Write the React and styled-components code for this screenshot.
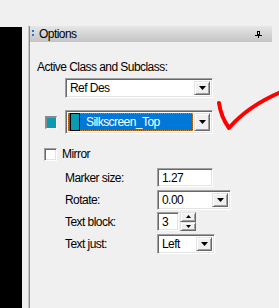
import React from 'react';
import styled, { createGlobalStyle } from 'styled-components';

const GlobalStyle = createGlobalStyle`
  body {
    margin: 0;
    background: #f0f0f0;
    font-family: "Liberation Sans", Arial, sans-serif;
  }
`;

const TEAL = '#0c9ab0';

const Page = styled.div`
  position: relative;
  width: 279px;
  height: 308px;
  overflow: hidden;
  background: #f0f0f0;
  display: flex;
  flex-direction: column;
  font-size: 12px;
  letter-spacing: -0.55px;
  color: #000;
`;

const TopStrip = styled.div`
  height: 26px;
  flex: none;
`;

const Body = styled.div`
  flex: 1;
  display: flex;
`;

const BlackPane = styled.div`
  width: 22px;
  margin-top: 1px;
  background: #000;
`;

const Dock = styled.div`
  margin-left: 7px;
  width: 242px;
  border-left: 1px solid #8c8c8c;
  box-shadow: -1px 0 0 #c8c8c8;
  display: flex;
  flex-direction: column;
`;

const Header = styled.div`
  height: 16px;
  display: flex;
  align-items: center;
  padding-left: 2px;
  background: linear-gradient(#e6e6e6, #c4c4c4);
`;

const Grip = styled.div`
  width: 2px;
  height: 7px;
  background: linear-gradient(#1e78d8 0 2px, transparent 2px 4px, #1e78d8 4px 6px, transparent 6px);
  margin-top: -1px;
`;

const Title = styled.span`
  margin-left: 5px;
  flex: 1;
`;

const Pin = styled.svg`
  margin-right: 10px;
`;

const Content = styled.div`
  padding: 18px 0 0 7px;
  display: flex;
  flex-direction: column;
`;

const Label = styled.div`
  line-height: 14px;
  white-space: nowrap;
`;

const Field = styled.div`
  box-sizing: border-box;
  width: ${p => p.$w}px;
  height: ${p => p.$h || 20}px;
  background: #fff;
  border-top: 1px solid #a0a0a0;
  border-left: 1px solid #a0a0a0;
  border-right: 1px solid #fff;
  border-bottom: 1px solid #fff;
  box-shadow: inset 1px 1px 0 #696969, inset -1px -1px 0 #e3e3e3;
  padding: 2px;
  display: flex;
  align-items: stretch;
  margin-left: ${p => p.$ml || 0}px;
  margin-top: ${p => p.$mt || 0}px;
`;

const FieldText = styled.div`
  flex: 1;
  display: flex;
  align-items: center;
  padding-left: 2px;
  white-space: nowrap;
  overflow: hidden;
`;

const RaisedButton = styled.div`
  box-sizing: border-box;
  width: ${p => p.$w || 16}px;
  flex: none;
  background: #f0f0f0;
  border-top: 1px solid #e3e3e3;
  border-left: 1px solid #e3e3e3;
  border-right: 1px solid #696969;
  border-bottom: 1px solid #696969;
  box-shadow: inset 1px 1px 0 #fff, inset -1px -1px 0 #a0a0a0;
  display: flex;
  align-items: center;
  justify-content: center;
`;

const Selected = styled.div`
  flex: 1;
  display: flex;
  align-items: center;
  background: #0078d7;
  color: #fff;
  border: 1px dotted #c87a20;
  margin-right: 1px;
  padding-left: 1px;
`;

const ItemSwatch = styled.div`
  width: 8px;
  height: 16px;
  background: ${TEAL};
  border: 1px solid #000;
  margin-right: 6px;
`;

const SwatchRow = styled.div`
  display: flex;
  align-items: center;
  margin-top: 12px;
`;

const ColorBox = styled.div`
  box-sizing: border-box;
  width: 12px;
  height: 13px;
  margin-left: 8px;
  margin-right: 8px;
  background: ${TEAL};
  border-top: 2px solid #8a8a8a;
  border-left: 2px solid #8a8a8a;
  border-right: 1px solid #fff;
  border-bottom: 1px solid #fff;
`;

const CheckRow = styled.label`
  display: flex;
  align-items: center;
  margin-top: 13px;
  margin-left: 7px;
  gap: 5px;
`;

const CheckBox = styled.div`
  box-sizing: border-box;
  width: 13px;
  height: 13px;
  background: #fff;
  border-top: 1px solid #a0a0a0;
  border-left: 1px solid #a0a0a0;
  border-right: 1px solid #fff;
  border-bottom: 1px solid #fff;
  box-shadow: inset 1px 1px 0 #696969, inset -1px -1px 0 #e3e3e3;
`;

const Grid = styled.div`
  display: grid;
  grid-template-columns: 92px auto;
  grid-auto-rows: 22px;
  margin-top: 7px;
  margin-left: 28px;
`;

const RowLabel = styled.div`
  height: 19px;
  display: flex;
  align-items: center;
`;

const Spinner = styled.div`
  display: flex;
`;

const SpinButtons = styled.div`
  display: flex;
  flex-direction: column;
  height: 19px;
  margin-left: 1px;
  & > div {
    flex: 1;
    width: 16px;
  }
`;

const Tick = styled.svg`
  position: absolute;
  left: 0;
  top: 0;
  pointer-events: none;
`;

const Arrow = ({ up, small }) => (
  <svg width={small ? 5 : 7} height={small ? 3 : 4} viewBox={small ? '0 0 5 3' : '0 0 7 4'}>
    {small
      ? <polygon points={up ? '2.5,0 5,3 0,3' : '0,0 5,0 2.5,3'} fill="#000" />
      : <polygon points={up ? '3.5,0 7,4 0,4' : '0,0 7,0 3.5,4'} fill="#000" />}
  </svg>
);

const Combo = ({ w, h, ml, mt, text, children }) => (
  <Field $w={w} $h={h} $ml={ml} $mt={mt}>
    {children || <FieldText>{text}</FieldText>}
    <RaisedButton><Arrow /></RaisedButton>
  </Field>
);

const App = () => {
  return (
    <>
      <GlobalStyle />
      <Page>
        <TopStrip />
        <Body>
          <BlackPane />
          <Dock>
            <Header>
              <Grip />
              <Title>Options</Title>
              <Pin width="7" height="7" viewBox="0 0 7 7">
                <rect x="2.5" y="0.5" width="2" height="3" fill="none" stroke="#000" strokeWidth="1" />
                <rect x="0" y="4" width="7" height="1" fill="#000" />
                <rect x="3" y="5" width="1" height="2" fill="#000" />
              </Pin>
            </Header>
            <Content>
              <Label>Active Class and Subclass:</Label>
              <Combo w={148} ml={28} mt={4} text="Ref Des" />
              <SwatchRow>
                <ColorBox />
                <Combo w={148} h={24}>
                  <Selected>
                    <ItemSwatch />
                    Silkscreen_Top
                  </Selected>
                </Combo>
              </SwatchRow>
              <CheckRow>
                <CheckBox />
                Mirror
              </CheckRow>
              <Grid>
                <RowLabel>Marker size:</RowLabel>
                <Field $w={56} $h={19}><FieldText>1.27</FieldText></Field>
                <RowLabel>Rotate:</RowLabel>
                <Combo w={74} text="0.00" />
                <RowLabel>Text block:</RowLabel>
                <Spinner>
                  <Field $w={22} $h={19}><FieldText>3</FieldText></Field>
                  <SpinButtons>
                    <RaisedButton><Arrow up small /></RaisedButton>
                    <RaisedButton><Arrow small /></RaisedButton>
                  </SpinButtons>
                </Spinner>
                <RowLabel>Text just:</RowLabel>
                <Combo w={58} text="Left" />
              </Grid>
            </Content>
          </Dock>
        </Body>
        <Tick width="279" height="308" viewBox="0 0 279 308">
          <path d="M219 103 Q221 117 229 128 Q248 106 281 92" fill="none" stroke="#ff0000" strokeWidth="4" strokeLinecap="round" strokeLinejoin="round" />
        </Tick>
      </Page>
    </>
  );
};

export default App;
